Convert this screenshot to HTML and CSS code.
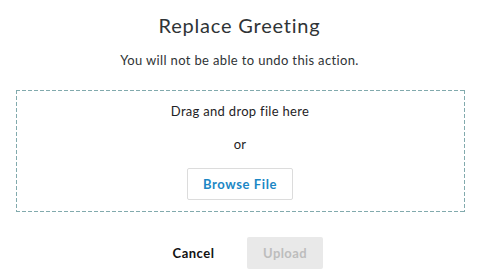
FILE: index.html
```html
<!DOCTYPE html>
<html>
<head>
<meta charset="utf-8">
<link rel="stylesheet" href="styles.css">
</head>
<body>
<div class="dialog">
  <h1 class="title">Replace Greeting</h1>
  <p class="subtitle">You will not be able to undo this action.</p>
  <div class="dropzone">
    <div class="drop-text">Drag and drop file here</div>
    <div class="or">or</div>
    <button class="browse">Browse File</button>
  </div>
  <div class="actions">
    <button class="cancel">Cancel</button>
    <button class="upload" disabled>Upload</button>
  </div>
</div>
</body>
</html>
```

FILE: styles.css
```css
html, body {
  margin: 0;
  padding: 0;
  background: #fff;
}
body {
  font-family: Lato, "Liberation Sans", sans-serif;
  color: #2b2f31;
}
.dialog {
  width: 479px;
  padding-top: 11px;
  display: flex;
  flex-direction: column;
  align-items: center;
}
.title {
  margin: 0;
  font-size: 20px;
  font-weight: 400;
  line-height: 28px;
  letter-spacing: 0.8px;
  color: #2f3436;
}
.subtitle {
  margin: 12px 0 0;
  font-size: 13px;
  line-height: 18px;
  letter-spacing: 0.35px;
  color: #2f3436;
}
.dropzone {
  box-sizing: border-box;
  width: 449px;
  height: 122px;
  margin-top: 21px;
  margin-left: 1px;
  padding-top: 12px;
  display: flex;
  flex-direction: column;
  align-items: center;
  background:
    repeating-linear-gradient(to right, #82aaad 0 4px, transparent 4px 6px) top left / 100% 1px no-repeat,
    repeating-linear-gradient(to right, #82aaad 0 4px, transparent 4px 6px) bottom left / 100% 1px no-repeat,
    repeating-linear-gradient(to bottom, #82aaad 0 4px, transparent 4px 6px) top left / 1px 100% no-repeat,
    repeating-linear-gradient(to bottom, #82aaad 0 4px, transparent 4px 6px) top right / 1px 100% no-repeat;
}
.drop-text,
.or {
  font-size: 13px;
  line-height: 18px;
  letter-spacing: 0.3px;
  color: #1f2325;
}
.or {
  margin-top: 15px;
}
button {
  font-family: inherit;
  cursor: pointer;
  padding: 0;
}
.browse {
  margin-top: 15px;
  width: 106px;
  height: 32px;
  background: #fff;
  border: 1px solid #dcdcdc;
  border-radius: 2px;
  color: #1b87c5;
  font-size: 13px;
  font-weight: 700;
  letter-spacing: 0.6px;
}
.actions {
  margin-top: 25px;
  display: flex;
  align-items: center;
  gap: 16px;
}
.cancel {
  background: none;
  border: none;
  font-size: 13px;
  font-weight: 700;
  letter-spacing: 0.5px;
  color: #111;
  width: 75px;
  height: 32px;
}
.upload {
  width: 76px;
  height: 32px;
  background: #e9e9e9;
  border: none;
  border-radius: 2px;
  font-size: 13px;
  font-weight: 700;
  letter-spacing: 0.4px;
  color: #bdbdbd;
}
```
